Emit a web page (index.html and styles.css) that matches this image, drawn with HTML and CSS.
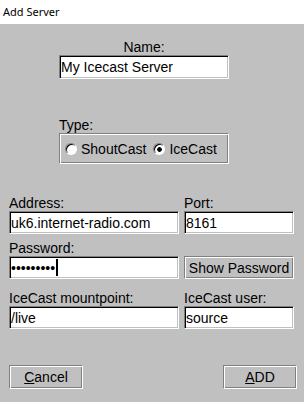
FILE: index.html
```html
<!DOCTYPE html>
<html>
<head>
	<title>Add Server</title>
	<link rel="stylesheet" href="styles.css">
</head>

<body>
	<div class="titlebar">Add Server</div>

	<form class="dialog">
		<div class="nameBlock">
			<label class="caption center" for="name">Name:</label>
			<input type="text" id="name" class="field" value="My Icecast Server" />
		</div>

		<div class="typeBlock">
			<div class="caption">Type:</div>
			<div class="groupBox">
				<label class="radio"><input type="radio" name="type" /> ShoutCast</label>
				<label class="radio"><input type="radio" name="type" checked /> IceCast</label>
			</div>
		</div>

		<div class="grid">
			<label class="caption" for="address">Address:</label>
			<label class="caption" for="port">Port:</label>
			<input type="text" id="address" class="field" value="uk6.internet-radio.com" />
			<input type="text" id="port" class="field" value="8161" />

			<label class="caption gapSmall" for="password">Password:</label>
			<div class="gapSmall"></div>
			<div class="caretWrap">
				<input type="password" id="password" class="field" value="123456789" />
				<span class="caret"></span>
			</div>
			<input type="button" class="button" value="Show Password" />

			<label class="caption gapBig" for="mount">IceCast mountpoint:</label>
			<label class="caption gapBig" for="user">IceCast user:</label>
			<input type="text" id="mount" class="field" value="/live" />
			<input type="text" id="user" class="field" value="source" />
		</div>

		<div class="actions">
			<button type="button" class="button wide"><u>C</u>ancel</button>
			<button type="button" class="button wide"><u>A</u>DD</button>
		</div>
	</form>
</body>
</html>
```

FILE: styles.css
```css
html {
	background: #c0c0c0;
}

body {
	margin: 0;
	font-family: "Liberation Sans", Arial, sans-serif;
	font-size: 14px;
	color: #000;
}

.titlebar {
	height: 24px;
	line-height: 24px;
	padding-left: 3px;
	background: #fff;
	font-family: "Noto Sans", sans-serif;
	font-size: 11px;
}

.dialog {
	margin: 0;
	padding: 0;
}

.caption {
	display: block;
	line-height: 15px;
}

.center {
	text-align: center;
}

.field {
	box-sizing: border-box;
	width: 100%;
	height: 23px;
	margin: 0;
	padding: 0 1px;
	font-family: "Liberation Sans", Arial, sans-serif;
	font-size: 14px;
	color: #000;
	background: #fff;
	border: 1px solid;
	border-color: #808080 #fff #fff #808080;
	box-shadow: inset 1px 1px 0 #000, inset -1px -1px 0 #c0c0c0;
	outline: none;
}

.nameBlock {
	width: 170px;
	margin: 16px 0 0 59px;
}

.nameBlock .field {
	height: 24px;
}

.typeBlock {
	width: 170px;
	margin: 39px 0 0 59px;
}

.groupBox {
	box-sizing: border-box;
	height: 31px;
	display: flex;
	align-items: center;
	gap: 7px;
	padding-left: 5px;
	border: 1px solid;
	border-color: #808080 #fff #fff #808080;
	box-shadow: inset 1px 1px 0 #fff, inset -1px -1px 0 #808080;
}

.radio {
	display: flex;
	align-items: center;
	gap: 4px;
}

.radio input {
	appearance: none;
	-webkit-appearance: none;
	box-sizing: border-box;
	width: 12px;
	height: 12px;
	margin: 0;
	border-radius: 50%;
	border: 1px solid;
	border-color: #808080 #fff #fff #808080;
	box-shadow: inset 1px 1px 0 #000;
	background: #fff;
}

.radio input:checked {
	background: radial-gradient(circle at 55% 55%, #000 0, #000 2px, #fff 2.6px);
}

.grid {
	display: grid;
	grid-template-columns: 170px 110px;
	column-gap: 5px;
	margin-top: 31px;
	padding-left: 9px;
}

.grid .caption {
	line-height: 16px;
}

.gapSmall {
	margin-top: 6px;
}

.gapBig {
	margin-top: 11px;
}

.caretWrap {
	position: relative;
}

.caret {
	position: absolute;
	left: 47px;
	top: 3px;
	width: 2px;
	height: 17px;
	background: #000;
}

.button {
	box-sizing: border-box;
	height: 23px;
	margin: 0;
	padding: 0;
	font-family: "Liberation Sans", Arial, sans-serif;
	font-size: 14px;
	color: #000;
	background: #c0c0c0;
	border: 1px solid;
	border-color: #808080 #fff #fff #808080;
	box-shadow: inset 1px 1px 0 #fff, inset -1px -1px 0 #808080;
}

.actions {
	display: flex;
	justify-content: space-between;
	margin-top: 36px;
	padding: 0 7px 0 9px;
}

.wide {
	width: 74px;
	height: 24px;
}
```
